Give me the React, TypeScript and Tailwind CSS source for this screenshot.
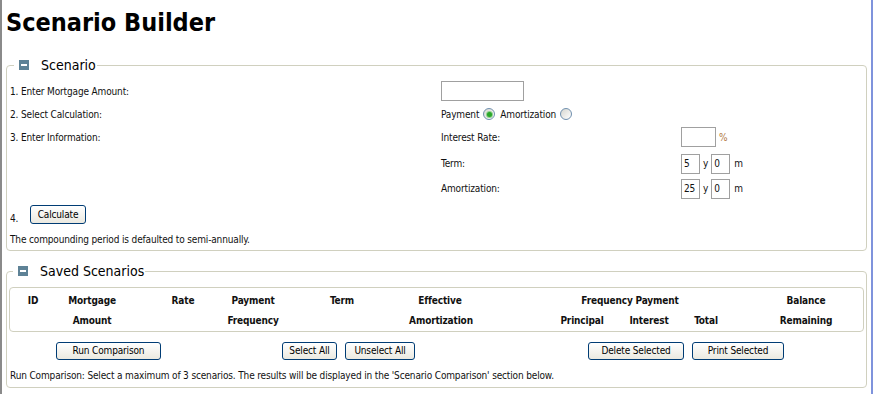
import React from 'react';

const Minus: React.FC = () => (
  <span className="inline-flex h-[10px] w-[10px] shrink-0 items-center justify-center bg-[#5e8296]">
    <span className="h-[2px] w-[6px] bg-white" />
  </span>
);

const Btn: React.FC<{ label: string; w: string; h?: string }> = ({ label, w, h = 'h-[19px]' }) => (
  <button
    className={`${h} ${w} shrink-0 rounded-[3px] border border-[#003c74] bg-gradient-to-b from-white to-[#ebe9e0] text-[10px] leading-none text-black`}
  >
    {label}
  </button>
);

const Radio: React.FC<{ checked?: boolean }> = ({ checked }) => (
  <span className="inline-flex h-[12px] w-[12px] items-center justify-center rounded-full border border-[#6f8fae] bg-gradient-to-br from-[#d6d6d0] to-white">
    {checked && <span className="h-[5px] w-[5px] rounded-full bg-[#2aa72a] ring-1 ring-[#8fd08f]" />}
  </span>
);

const Box: React.FC<{ w: string; value?: string }> = ({ w, value }) => (
  <span className={`flex h-[20px] ${w} items-center border border-[#a0a0a0] bg-white pl-[2px] text-[10px]`}>{value}</span>
);

const Cell: React.FC<{ ml: string; text: string }> = ({ ml, text }) => (
  <span className={`flex w-0 shrink-0 justify-center whitespace-nowrap ${ml}`}>{text}</span>
);

export default function App() {
  return (
    <div className="min-h-[394px] w-[875px] bg-white font-['DejaVu_Sans_Condensed','DejaVu_Sans',sans-serif] text-[10px] tracking-[-0.15px] text-[#111]">
      <div className="min-h-[394px] w-[873px] border-l-2 border-r-2 border-l-[#8a8a8a] border-r-[#7f93dc] pr-[2px]">
        <h1 className="pl-[4px] pt-[7px] text-[25px] font-bold leading-[32px] tracking-normal text-black">Scenario Builder</h1>

        {/* scenario */}
        <fieldset className="ml-[4px] mr-[2px] mt-[18px] rounded-[4px] border border-[#d0d0bf] px-[3px]">
          <legend className="ml-[4px] flex items-center gap-[12px] pl-[5px] pr-[1px]">
            <Minus />
            <span className="text-[14px] leading-[16px] tracking-normal text-black">Scenario</span>
          </legend>
          <div className="mt-[6px] flex h-[24px] items-center">
            <span className="w-[431px]">1. Enter Mortgage Amount:</span>
            <Box w="w-[83px]" />
          </div>
          <div className="flex h-[22px] items-center">
            <span className="w-[431px]">2. Select Calculation:</span>
            <span className="flex items-center gap-[4px]">
              Payment <Radio checked /> <span className="ml-[1px]">Amortization</span> <Radio />
            </span>
          </div>
          <div className="flex h-[24px] items-center">
            <span className="w-[431px]">3. Enter Information:</span>
            <span className="w-[240px]">Interest Rate:</span>
            <Box w="w-[35px]" />
            <span className="ml-[3px] text-[#b07840]">%</span>
          </div>
          <div className="mt-[2px] flex h-[25px] items-center">
            <span className="w-[431px]" />
            <span className="w-[240px]">Term:</span>
            <Box w="w-[19px]" value="5" />
            <span className="mx-[3px]">y</span>
            <Box w="w-[19px]" value="0" />
            <span className="ml-[4px]">m</span>
          </div>
          <div className="flex h-[25px] items-center">
            <span className="w-[431px]" />
            <span className="w-[240px]">Amortization:</span>
            <Box w="w-[19px]" value="25" />
            <span className="mx-[3px]">y</span>
            <Box w="w-[19px]" value="0" />
            <span className="ml-[4px]">m</span>
          </div>
          <div className="mt-[3px] flex h-[22px] items-end">
            <span className="w-[20px]">4.</span>
            <span className="mb-[2px]">
              <Btn label="Calculate" w="w-[56px]" />
            </span>
          </div>
          <div className="mt-[2px] flex h-[22px] items-center">The compounding period is defaulted to semi-annually.</div>
        </fieldset>

        {/* saved scenarios */}
        <fieldset className="ml-[4px] mr-[2px] mt-[12px] rounded-[4px] border border-[#d0d0bf] px-[2px] pb-[2px]">
          <legend className="ml-[4px] flex items-center gap-[12px] pl-[5px] pr-[1px]">
            <Minus />
            <span className="text-[14px] leading-[16px] tracking-normal text-black">Saved Scenarios</span>
          </legend>
          <div className="mt-[8px] rounded-[4px] border border-[#d0d0bf] pb-[1px] pt-[2px] font-bold">
            <div className="flex h-[20px] items-center">
              <Cell ml="ml-[23px]" text="ID" />
              <Cell ml="ml-[59px]" text="Mortgage" />
              <Cell ml="ml-[91px]" text="Rate" />
              <Cell ml="ml-[70px]" text="Payment" />
              <Cell ml="ml-[89px]" text="Term" />
              <Cell ml="ml-[98px]" text="Effective" />
              <Cell ml="ml-[190px]" text="Frequency Payment" />
              <Cell ml="ml-[176px]" text="Balance" />
            </div>
            <div className="flex h-[20px] items-center">
              <Cell ml="ml-[82px]" text="Amount" />
              <Cell ml="ml-[161px]" text="Frequency" />
              <Cell ml="ml-[188px]" text="Amortization" />
              <Cell ml="ml-[141px]" text="Principal" />
              <Cell ml="ml-[67px]" text="Interest" />
              <Cell ml="ml-[57px]" text="Total" />
              <Cell ml="ml-[100px]" text="Remaining" />
            </div>
          </div>
          <div className="mt-[10px] flex items-center">
            <span className="ml-[47px]">
              <Btn label="Run Comparison" w="w-[105px]" h="h-[18px]" />
            </span>
            <span className="ml-[121px]">
              <Btn label="Select All" w="w-[55px]" h="h-[18px]" />
            </span>
            <span className="ml-[8px]">
              <Btn label="Unselect All" w="w-[70px]" h="h-[18px]" />
            </span>
            <span className="ml-[173px]">
              <Btn label="Delete Selected" w="w-[96px]" h="h-[18px]" />
            </span>
            <span className="ml-[8px]">
              <Btn label="Print Selected" w="w-[92px]" h="h-[18px]" />
            </span>
          </div>
          <div className="mt-[5px] flex h-[20px] items-center pl-[1px]">
            Run Comparison: Select a maximum of 3 scenarios. The results will be displayed in the 'Scenario Comparison' section below.
          </div>
        </fieldset>
      </div>
    </div>
  );
}
